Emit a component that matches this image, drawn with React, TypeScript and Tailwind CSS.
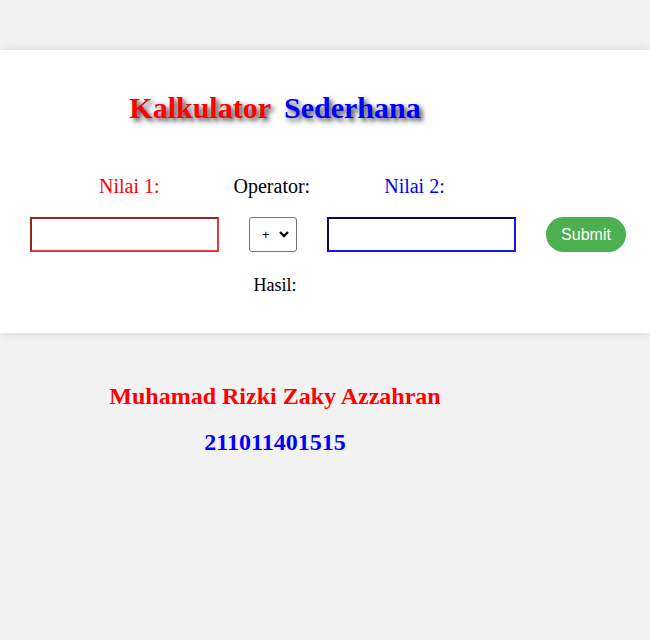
export default function App() {
  return (
    <div className="min-h-[640px] bg-[#f2f2f2] pt-[50px] font-['Liberation_Serif',serif]">
      <section className="bg-white shadow-[0_0_10px_rgba(0,0,0,0.12)] h-[283px]">
        <div className="w-[550px] text-center pt-[41px]">
          <h1 className="text-[30px] font-bold leading-[34px] [text-shadow:3px_3px_5px_rgba(0,0,0,0.75)]">
            <span className="text-[#ff0000]">Kalkulator</span>
            <span className="text-[#0000ff] ml-[13px]">Sederhana</span>
          </h1>
        </div>

        <div className="flex gap-[74px] pl-[99px] mt-[49px] text-[20px] leading-[24px]">
          <label className="text-[#ff0000]">Nilai 1:</label>
          <label className="text-black">Operator:</label>
          <label className="text-[#0000ff]">Nilai 2:</label>
        </div>

        <div className="flex items-center gap-[30px] pl-[30px] mt-[19px]">
          <input
            type="text"
            className="w-[189px] h-[35px] border-2 border-t-[#952424] border-l-[#952424] border-b-[#e03a3a] border-r-[#e03a3a] bg-white outline-none"
          />
          <div className="relative w-[48px] h-[35px]">
            <select className="appearance-none w-full h-full border border-[#767676] rounded-[3px] bg-white pl-[12px] text-[13px] font-['Liberation_Sans',sans-serif] text-black">
              <option>+</option>
              <option>-</option>
              <option>*</option>
              <option>/</option>
            </select>
            <svg
              className="absolute right-[8px] top-[14px] pointer-events-none"
              width="10"
              height="7"
              viewBox="0 0 10 7"
            >
              <polyline points="1,1 5,5 9,1" fill="none" stroke="#111" strokeWidth="2.4" />
            </svg>
          </div>
          <input
            type="text"
            className="w-[189px] h-[35px] border-2 border-t-[#0a0a45] border-l-[#0a0a45] border-b-[#1515f0] border-r-[#1515f0] bg-white outline-none"
          />
          <button className="w-[80px] h-[35px] rounded-full bg-[#4caf50] text-white text-[16px] font-['Liberation_Sans',sans-serif]">
            Submit
          </button>
        </div>

        <div className="w-[550px] text-center mt-[22px] text-[18px] leading-[22px] text-black">
          Hasil:
        </div>
      </section>

      <div className="w-[550px] text-center font-bold text-[24px] leading-[28px]">
        <h2 className="text-[#ff0000] mt-[49px]">Muhamad Rizki Zaky Azzahran</h2>
        <h2 className="text-[#0000ff] mt-[18px]">211011401515</h2>
      </div>
    </div>
  );
}
